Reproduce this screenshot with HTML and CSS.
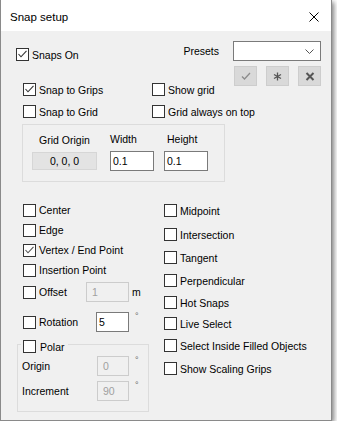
FILE: index.html
```html
<!DOCTYPE html>
<html>
<head>
<meta charset="utf-8">
<link rel="stylesheet" href="styles.css">
</head>
<body>
<div class="window">
  <div class="titlebar">
    <span class="title">Snap setup</span>
    <svg class="close" width="10" height="10" viewBox="0 0 10 10"><path d="M0.5 0.5 L9.5 9.5 M9.5 0.5 L0.5 9.5" stroke="#000" stroke-width="1" fill="none"/></svg>
  </div>
  <div class="content">
    <div class="top">
      <div class="top-left">
        <div class="chk snaps-on"><span class="box"><svg width="11" height="11" viewBox="0 0 11 11"><path d="M1.5 5 L4 7.8 L9.5 1.8" stroke="#333" stroke-width="1.1" fill="none"/></svg></span>Snaps On</div>
        <div class="opts">
          <div class="col col1">
            <div class="chk"><span class="box"><svg width="11" height="11" viewBox="0 0 11 11"><path d="M1.5 5 L4 7.8 L9.5 1.8" stroke="#333" stroke-width="1.1" fill="none"/></svg></span>Snap to Grips</div>
            <div class="chk"><span class="box"></span>Snap to Grid</div>
          </div>
          <div class="col">
            <div class="chk"><span class="box"></span>Show grid</div>
            <div class="chk"><span class="box"></span>Grid always on top</div>
          </div>
        </div>
      </div>
      <div class="presets">
        <div class="presets-row">
          <span>Presets</span>
          <div class="combo"><svg width="9" height="5" viewBox="0 0 9 5"><path d="M0.5 0.5 L4.5 4.5 L8.5 0.5" stroke="#555" stroke-width="1" fill="none"/></svg></div>
        </div>
        <div class="preset-btns">
          <div class="pbtn"><svg width="10" height="8" viewBox="0 0 10 8"><path d="M1 4.5 L3.5 7 L9 1" stroke="#8c8c8c" stroke-width="1.3" fill="none"/></svg></div>
          <div class="pbtn"><svg width="9" height="9" viewBox="0 0 9 9"><path d="M4.5 0.5 V8.5 M1 2.5 L8 6.5 M1 6.5 L8 2.5" stroke="#555" stroke-width="1.3" fill="none"/></svg></div>
          <div class="pbtn"><svg width="10" height="9" viewBox="0 0 10 9"><path d="M1.5 1 L8.5 8 M8.5 1 L1.5 8" stroke="#555" stroke-width="2" fill="none"/></svg></div>
        </div>
      </div>
    </div>

    <div class="gridbox">
      <div class="gcol gcol1">
        <div class="glabel">Grid Origin</div>
        <div class="field origin-field">0, 0, 0</div>
      </div>
      <div class="gcol gcol2">
        <div class="glabel">Width</div>
        <div class="field">0.1</div>
      </div>
      <div class="gcol gcol3">
        <div class="glabel hlabel">Height</div>
        <div class="field">0.1</div>
      </div>
    </div>

    <div class="snaps">
      <div class="left">
        <div class="row"><span class="box"></span>Center</div>
        <div class="row"><span class="box"></span>Edge</div>
        <div class="row"><span class="box"><svg width="11" height="11" viewBox="0 0 11 11"><path d="M1.5 5 L4 7.8 L9.5 1.8" stroke="#555" stroke-width="1.1" fill="none"/></svg></span>Vertex / End Point</div>
        <div class="row"><span class="box"></span>Insertion Point</div>
        <div class="row offset-row"><span class="box"></span><span class="lbl-offset">Offset</span><div class="field disabled w-offset">1</div><span class="unit">m</span></div>
        <div class="row rot-row"><span class="box"></span><span class="lbl-rot">Rotation</span><div class="field w-rot">5</div><span class="deg">°</span></div>
        <div class="polar">
          <div class="legend"><span class="box"></span>Polar</div>
          <div class="row prow1"><span class="plabel">Origin</span><div class="field disabled w-pol">0</div><span class="deg">°</span></div>
          <div class="row prow2"><span class="plabel">Increment</span><div class="field disabled w-pol">90</div><span class="deg">°</span></div>
        </div>
      </div>
      <div class="right">
        <div class="chk"><span class="box"></span>Midpoint</div>
        <div class="chk"><span class="box"></span>Intersection</div>
        <div class="chk"><span class="box"></span>Tangent</div>
        <div class="chk"><span class="box"></span>Perpendicular</div>
        <div class="chk"><span class="box"></span>Hot Snaps</div>
        <div class="chk"><span class="box"></span>Live Select</div>
        <div class="chk"><span class="box"></span>Select Inside Filled Objects</div>
        <div class="chk"><span class="box"></span>Show Scaling Grips</div>
      </div>
    </div>
  </div>
</div>
</body>
</html>
```
FILE: styles.css
```css
* { box-sizing: border-box; }
html, body { margin: 0; padding: 0; background: #fff; }
body {
  font-family: "Liberation Sans", Arial, sans-serif;
  font-size: 10.5px;
  color: #000;
}
.window {
  width: 332px;
  height: 421px;
  border: 1px solid #8a8a8a;
  border-top: none;
  background: #f0f0f0;
  box-shadow: 2px 2px 5px rgba(0, 0, 0, 0.5);
  display: flex;
  flex-direction: column;
}
.titlebar {
  height: 31px;
  flex: none;
  background: #fff;
  display: flex;
  align-items: center;
  justify-content: space-between;
  padding: 2px 12px 0 9px;
}
.title { font-size: 11.5px; }
.content { flex: 1; }

.chk, .row {
  display: flex;
  align-items: center;
  white-space: nowrap;
}
.chk { height: 13px; }
.row { height: 20px; }
.box {
  width: 13px;
  height: 13px;
  flex: none;
  border: 1px solid #333;
  background: #fff;
  margin-right: 3px;
  display: flex;
  align-items: center;
  justify-content: center;
}

/* top */
.top { display: flex; padding-top: 10px; }
.top-left { flex: 1; min-width: 0; padding-left: 15px; }
.snaps-on { margin-top: 7px; }
.opts { display: flex; margin-top: 22px; padding-left: 7px; }
.col { display: flex; flex-direction: column; gap: 9px; }
.col1 { width: 129px; flex: none; }

.presets {
  display: flex;
  flex-direction: column;
  align-items: flex-end;
  margin-right: 10px;
}
.presets-row { display: flex; align-items: center; gap: 14px; height: 20px; }
.combo {
  width: 88px;
  height: 20px;
  border: 1px solid #7a7a7a;
  background: #fff;
  display: flex;
  align-items: center;
  justify-content: flex-end;
  padding-right: 6px;
}
.preset-btns { display: flex; gap: 9px; margin-top: 5px; }
.pbtn {
  width: 23px;
  height: 20px;
  background: #d9d9d9;
  border: 1px solid #cdcdcd;
  display: flex;
  align-items: center;
  justify-content: center;
}

/* grid box */
.gridbox {
  margin: 6px 0 0 21px;
  width: 203px;
  border: 1px solid #dcdcdc;
  display: flex;
  padding: 8px 0 10px 9px;
}
.gcol { display: flex; flex-direction: column; }
.gcol1 { width: 65px; align-items: center; margin-right: 13px; }
.gcol2 { width: 44px; margin-right: 10px; }
.gcol3 { width: 44px; }
.glabel { height: 13px; line-height: 13px; }
.gcol1 .glabel { margin-top: 1px; margin-bottom: -1px; }
.hlabel { padding-left: 3px; }
.gcol .field { margin-top: 5px; }

.field {
  height: 20px;
  border: 1px solid #7a7a7a;
  background: #fff;
  padding-left: 2px;
  line-height: 18px;
}
.origin-field {
  width: 65px;
  height: 18px;
  line-height: 16px;
  margin-top: 6px !important;
  background: #e3e3e3;
  border-color: #d6d6d6;
  text-align: center;
  padding-left: 0;
}
.disabled {
  background: #f0f0f0;
  border-color: #cccccc;
  color: #a0a0a0;
  padding-left: 5px;
}

/* snaps */
.snaps { display: flex; margin-top: 18px; }
.left {
  margin-left: 22px;
  width: 141px;
  flex: none;
  display: flex;
  flex-direction: column;
}
.offset-row { margin-top: 2px; }
.lbl-offset { width: 47px; flex: none; }
.lbl-rot { width: 57px; flex: none; }
.w-offset { width: 43px; }
.w-rot { width: 33px; }
.w-pol { width: 32px; }
.unit { margin-left: 3px; }
.deg {
  align-self: flex-start;
  margin-left: 6px;
  font-size: 9px;
  line-height: 9px;
  color: #666;
}
.rot-row { margin-top: 10px; }
.polar {
  margin: 12px 0 0 -6px;
  width: 132px;
  border: 1px solid #dcdcdc;
  padding: 0 0 10px 4px;
  display: flex;
  flex-direction: column;
}
.legend {
  display: flex;
  align-items: center;
  height: 13px;
  margin: -5px 0 0 -1px;
  padding: 0 3px 0 2px;
  background: #f0f0f0;
  align-self: flex-start;
}
.legend .box { margin-right: 4px; }
.plabel { width: 75px; flex: none; }
.prow1 { margin-top: 3px; }
.prow2 { margin-top: 5px; }

.right {
  display: grid;
  grid-template-rows: 24px 23px 23px 22px 21px 22px 23px 13px;
  align-items: start;
  padding-top: 4px;
}
```
